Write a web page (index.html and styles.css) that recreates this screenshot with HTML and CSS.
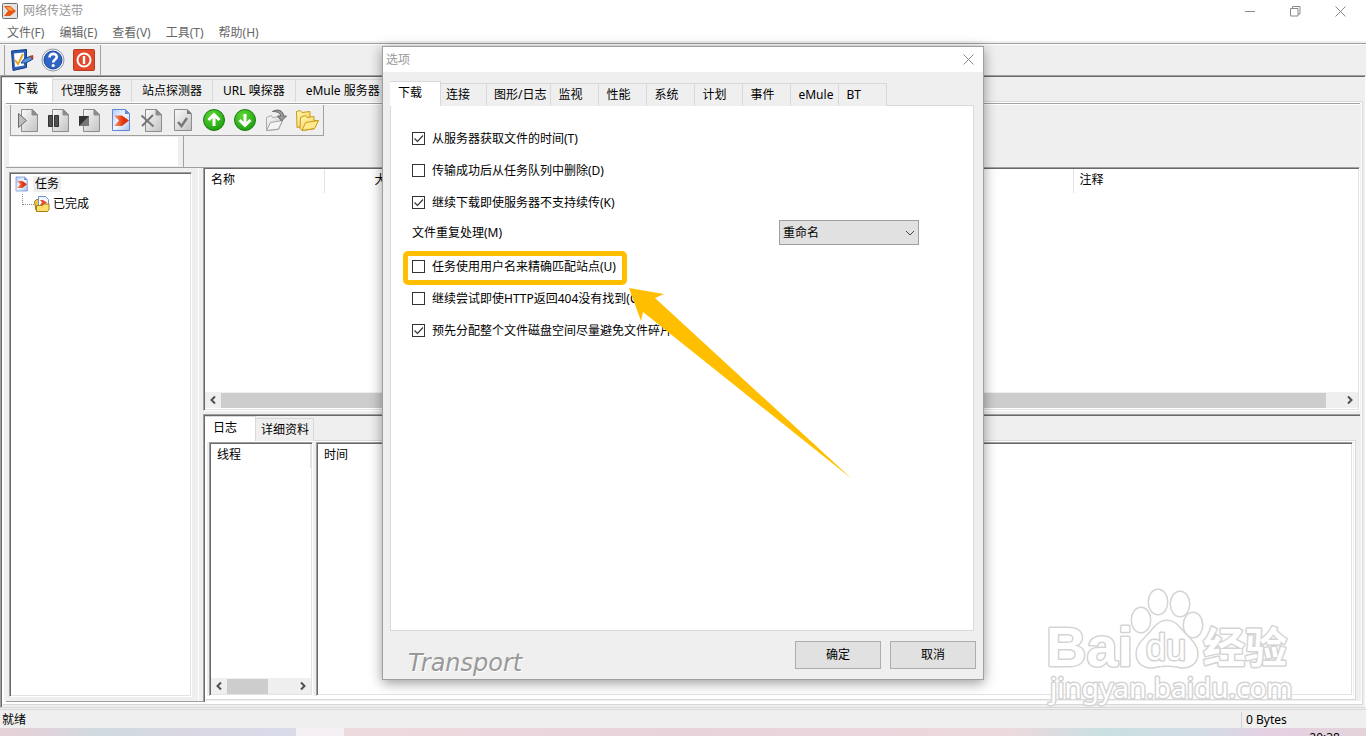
FILE: index.html
```
<!DOCTYPE html>
<html lang="zh-CN">
<head>
    <meta charset="UTF-8">
    <meta name="viewport" content="width=device-width, initial-scale=1.0">
    <title>网络传送带</title>
    <link rel="stylesheet" href="styles.css">
</head>
<body>

    <!-- shared icon parts -->
    <svg class="defs" width="0" height="0" aria-hidden="true">
        <defs>
            <linearGradient id="grey" x1="0" y1="0" x2="1" y2="1">
                <stop offset="0" stop-color="#fafafa"/>
                <stop offset="1" stop-color="#c2c2c2"/>
            </linearGradient>
            <linearGradient id="blue" x1="0" y1="0" x2="1" y2="1">
                <stop offset="0" stop-color="#b4ccf8"/>
                <stop offset=".5" stop-color="#f4f8ff"/>
                <stop offset="1" stop-color="#a9c2ee"/>
            </linearGradient>
            <linearGradient id="orange" x1="0" y1="0" x2="1" y2="0">
                <stop offset="0" stop-color="#f8a27a"/>
                <stop offset=".6" stop-color="#e0350e"/>
                <stop offset="1" stop-color="#d92c08"/>
            </linearGradient>
            <radialGradient id="green" cx=".4" cy=".3" r=".8">
                <stop offset="0" stop-color="#5fd836"/>
                <stop offset="1" stop-color="#159a0c"/>
            </radialGradient>
            <linearGradient id="yellow" x1="0" y1="0" x2="1" y2="1">
                <stop offset="0" stop-color="#fff6b8"/>
                <stop offset="1" stop-color="#f7cb45"/>
            </linearGradient>
            <symbol id="page" viewBox="0 0 24 24">
                <path d="M5.500 1.500h11l5 5v17h-16z" fill="url(#grey)" stroke="#8d8d8d"/>
                <path d="M16 1.500v5.500h5.500z" fill="#8b8b8b" stroke="#8d8d8d"/>
            </symbol>
            <symbol id="arrow-page" viewBox="0 0 24 24">
                <path d="M3.500 1.500h13l4 4v17h-17z" fill="url(#blue)" stroke="#5f87d6"/>
                <path d="M16 1.500v4.500h4.500z" fill="#5f87d6"/>
                <path d="M5 7.500h8l7 5-7 5.500H5l5-5.500z" fill="url(#orange)"/>
            </symbol>
        </defs>
    </svg>

    <div class="window">
        <header class="titlebar">
            <svg class="app-icon" viewBox="0 0 16 16">
                <rect x=".5" y=".5" width="15" height="15" rx="1" fill="#e4e4e4" stroke="#6e6e6e"/>
                <path d="M2 3h6l6 5-6 5H2l4-5z" fill="#e8550e"/>
                <path d="M4 4h4l4 3.500H7z" fill="#f7a54a"/>
            </svg>
            <h1>网络传送带</h1>
            <div class="window-controls">
                <button aria-label="最小化"><svg viewBox="0 0 11 11"><path d="M0 5.500h10"/></svg></button>
                <button aria-label="还原"><svg viewBox="0 0 11 11"><path d="M.5 2.500h7.500v7.500H.5zM2.500 2.500v-2h7.500v7.500h-2"/></svg></button>
                <button aria-label="关闭"><svg viewBox="0 0 11 11"><path d="M.5.5l10 10M10.500.5l-10 10"/></svg></button>
            </div>
        </header>

        <nav class="menubar">
            <button>文件(F)</button>
            <button>编辑(E)</button>
            <button>查看(V)</button>
            <button>工具(T)</button>
            <button>帮助(H)</button>
        </nav>

        <div class="main-bar">
            <div class="toolbar">
                <button aria-label="选项">
                    <svg viewBox="0 0 24 24">
                        <path d="M1.500 3l15-1.500v18L3 22.500z" fill="#2c62b8" stroke="#123a86"/>
                        <path d="M4 5.500l10-1v13l-9 1.500z" fill="#fff"/>
                        <path d="M5 12l3 4 5-10" fill="none" stroke="#e8a020" stroke-width="1.800"/>
                        <path d="M11 15l3-4 7-3 2 3-7 4z" fill="#5794dd" stroke="#1d4690"/>
                        <path d="M20 8l3-1 .5 3-2 1z" fill="#c33b20"/>
                    </svg>
                </button>
                <button aria-label="帮助">
                    <svg viewBox="0 0 24 24">
                        <circle cx="12" cy="12" r="11" fill="#f4f6fa" stroke="#8f98a8"/>
                        <circle cx="12" cy="12" r="9" fill="#2e64c4" stroke="#1b459c"/>
                        <path d="M8.500 9.500c0-5 7.500-4.500 7.200-.3-.2 2.400-3.500 2.500-3.500 5.300" fill="none" stroke="#fff" stroke-width="2.600"/>
                        <circle cx="12.200" cy="17.500" r="1.600" fill="#fff"/>
                    </svg>
                </button>
                <button aria-label="退出">
                    <svg viewBox="0 0 24 24">
                        <rect x="1.500" y="1.500" width="21" height="21" rx="1" fill="#e2492b" stroke="#b83a22"/>
                        <circle cx="12" cy="12" r="6.500" fill="none" stroke="#fff" stroke-width="2"/>
                        <path d="M12 8v8" stroke="#fff" stroke-width="2.400"/>
                    </svg>
                </button>
            </div>
        </div>

        <main class="client">
            <div class="tabs wide">
                <button class="active">下载</button>
                <button>代理服务器</button>
                <button>站点探测器</button>
                <button>URL 嗅探器</button>
                <button>eMule 服务器</button>
            </div>
            <div class="page">
                <div class="task-bar">
                    <div class="toolbar">
                        <button aria-label="开始"><svg viewBox="0 0 24 24"><use href="#page"/><path d="M2.500 5.500l8 7-8 7z" fill="#bdbdbd" stroke="#6a6a6a"/></svg></button>
                        <button aria-label="暂停"><svg viewBox="0 0 24 24"><use href="#page"/><path d="M1.500 7.500h4v11h-4zM7.500 7.500h4v11h-4z" fill="#505050" stroke="#333"/></svg></button>
                        <button aria-label="停止"><svg viewBox="0 0 24 24"><use href="#page"/><path d="M1 8h10v10H1z" fill="#777"/><path d="M1 8h10L1 18z" fill="#333"/></svg></button>
                        <button aria-label="新建任务"><svg viewBox="0 0 24 24"><use href="#arrow-page"/></svg></button>
                        <button aria-label="删除"><svg viewBox="0 0 24 24"><use href="#page"/><path d="M1.500 7.500l12 11M13 7L2 18" fill="none" stroke="#777" stroke-width="2"/></svg></button>
                        <button aria-label="属性"><svg viewBox="0 0 24 24"><path d="M3.500 1.500h13l4 4v17h-17z" fill="url(#grey)" stroke="#8d8d8d"/><path d="M16 1.500v4.500h4.500z" fill="#777"/><path d="M7 14l3.500 4L16 10" fill="none" stroke="#777" stroke-width="2.400"/></svg></button>
                        <button aria-label="上移"><svg viewBox="0 0 24 24"><circle cx="12" cy="12" r="10.500" fill="url(#green)" stroke="#1b7d14"/><path d="M12 18V6M6.500 12L12 6.500l5.500 5.500" fill="none" stroke="#fff" stroke-width="3"/></svg></button>
                        <button aria-label="下移"><svg viewBox="0 0 24 24"><circle cx="12" cy="12" r="10.500" fill="url(#green)" stroke="#1b7d14"/><path d="M12 6v12M6.500 12l5.500 5.500 5.500-5.500" fill="none" stroke="#fff" stroke-width="3"/></svg></button>
                        <button aria-label="打开文件"><svg viewBox="0 0 24 24"><path d="M2.500 9.500l5-2 1 2 8-1v4l2 0-4 9-12 1z" fill="url(#grey)" stroke="#aaa"/><path d="M2.500 22.500l4-8 12-2-4 8.500z" fill="#f3f3f3" stroke="#a5a5a5"/><path d="M8.500 3.500c5-3 11-1 11 4.500h3l-5 5-4-5h3c0-3-3-4.500-8-4.500z" fill="#999" stroke="#666"/></svg></button>
                        <button aria-label="打开文件夹"><svg viewBox="0 0 24 24"><path d="M1.500 3.500l4-1 1.500 2 8-1v14l-13 2z" fill="url(#yellow)" stroke="#c99a1c"/><path d="M5.500 9.500l5-2 1.500 2 7-1v4l4 0-4 8.500-12 1.500-2-2z" fill="url(#yellow)" stroke="#c99a1c"/><path d="M7 22.500l3.500-8 13-2-4 8z" fill="#ffe98c" stroke="#c99a1c"/></svg></button>
                    </div>
                </div>
                <div class="filter-bar">
                    <input type="text" aria-label="查找">
                </div>

                <div class="split">
                    <aside class="tree-pane">
                        <ul class="tree sunken">
                            <li><svg viewBox="2 0 21 24"><use href="#arrow-page" width="24" height="24"/></svg><span class="selected">任务</span></li>
                            <li class="child">
                                <svg viewBox="0 0 16 16"><path d="M.5 5.500l2-2H5V14.500H2z" fill="#f2c83c" stroke="#9b7a17"/><path d="M4.500.5h7l3 3v8h-10z" fill="#f2f6ff" stroke="#6e93d3"/><path d="M6 4h3l4 2.500L9 9H6l2-2.500z" fill="#e5512b"/><path d="M2.500 9.500h6l1.500-1.500h5v5.500l-1.500 2h-11z" fill="#ffdf6b" stroke="#a37f16"/></svg>
                                <span>已完成</span>
                            </li>
                        </ul>
                    </aside>

                    <section class="views">
                        <div class="task-list sunken">
                            <table>
                                <thead>
                                    <tr><th class="name">名称</th><th class="size">大小</th><th></th><th class="note">注释</th></tr>
                                </thead>
                            </table>
                            <div class="scrollbar">
                                <svg viewBox="0 0 16 16"><path d="M10 4.500L6.500 8l3.500 3.500"/></svg>
                                <div class="track"><div class="thumb"></div></div>
                                <svg viewBox="0 0 16 16"><path d="M6 4.500L9.500 8 6 11.500"/></svg>
                            </div>
                        </div>

                        <div class="log">
                            <div class="tabs">
                                <button class="active">日志</button>
                                <button>详细资料</button>
                            </div>
                            <div class="log-page">
                                <div class="threads sunken">
                                    <table>
                                        <thead><tr><th>线程</th></tr></thead>
                                    </table>
                                    <div class="scrollbar">
                                        <svg viewBox="0 0 16 16"><path d="M10 4.500L6.500 8l3.500 3.500"/></svg>
                                        <div class="track"><div class="thumb short"></div></div>
                                        <svg viewBox="0 0 16 16"><path d="M6 4.500L9.500 8 6 11.500"/></svg>
                                    </div>
                                </div>
                                <div class="messages sunken">
                                    <table>
                                        <thead><tr><th>时间</th></tr></thead>
                                    </table>
                                </div>
                            </div>
                        </div>
                    </section>
                </div>
            </div>
        </main>

        <footer class="statusbar">
            <span>就绪</span>
            <span class="bytes">0 Bytes</span>
        </footer>
        <div class="desktop-bar"><div class="running"></div><time>20:38</time></div>
    </div>

    <svg class="watermark" viewBox="0 0 260 130" aria-label="Baidu 经验">
        <g class="mark">
            <text class="latin" x="6" y="86">Bai</text>
            <ellipse cx="101" cy="40" rx="9" ry="12"/>
            <ellipse cx="118" cy="22" rx="9" ry="12"/>
            <ellipse cx="140" cy="24" rx="9" ry="12"/>
            <ellipse cx="153" cy="45" rx="9" ry="12"/>
            <path d="M127 41c9 0 13 8 19 14 7 7 12 12 11 21-1 8-8 12-17 11-9-2-17-2-26 0-9 1-16-3-17-11-1-9 4-14 11-21 6-6 10-14 19-14z"/>
            <text class="du" x="106" y="80">du</text>
            <text class="cjk" x="163" y="83">经验</text>
            <text class="url" x="10" y="118">jingyan.baidu.com</text>
        </g>
    </svg>

    <section class="dialog" role="dialog" aria-labelledby="dialog-title">
        <header>
            <h2 id="dialog-title">选项</h2>
            <button aria-label="关闭"><svg viewBox="0 0 11 11"><path d="M.5.5l10 10M10.500.5l-10 10"/></svg></button>
        </header>
        <div class="dialog-body">
            <div class="tabs">
                <button class="active">下载</button>
                <button>连接</button>
                <button>图形/日志</button>
                <button>监视</button>
                <button>性能</button>
                <button>系统</button>
                <button>计划</button>
                <button>事件</button>
                <button>eMule</button>
                <button>BT</button>
            </div>
            <form class="options">
                <label><input type="checkbox" checked>从服务器获取文件的时间(T)</label>
                <label><input type="checkbox">传输成功后从任务队列中删除(D)</label>
                <label><input type="checkbox" checked>继续下载即使服务器不支持续传(K)</label>
                <div class="duplicate">
                    <label for="duplicate">文件重复处理(M)</label>
                    <select id="duplicate"><option>重命名</option></select>
                </div>
                <label class="marked"><input type="checkbox">任务使用用户名来精确匹配站点(U)</label>
                <label><input type="checkbox">继续尝试即使HTTP返回404没有找到(C)</label>
                <label><input type="checkbox" checked>预先分配整个文件磁盘空间尽量避免文件碎片</label>
            </form>
        </div>
        <footer>
            <span class="brand">Transport</span>
            <button>确定</button>
            <button>取消</button>
        </footer>
        <svg class="pointer" viewBox="0 0 223 191" aria-hidden="true">
            <path d="M0 0l35 6-9 4 197 181L14 24l-2 9z" fill="#ffbf00"/>
        </svg>
    </section>

</body>
</html>
```
FILE: styles.css
```
* {
    box-sizing: border-box;
}
body {
    margin: 0;
    font: 12px/16px "Noto Sans", "Noto Sans CJK SC", sans-serif;
    color: #000;
    background: #efefef;
    overflow: hidden;
}
h1, h2 {
    margin: 0;
    font-size: 12px;
    font-weight: normal;
    color: #999;
}
button, input, select {
    font: inherit;
    color: inherit;
    margin: 0;
}
button {
    padding: 0;
    border: none;
    background: none;
}
svg {
    display: block;
}
.defs {
    position: absolute;
}

.window {
    display: flex;
    flex-direction: column;
    height: 100vh;
}
.titlebar {
    display: flex;
    align-items: center;
    gap: 5px;
    height: 22px;
    padding: 0 3px 0 2px;
    background: #fff;
}
.app-icon {
    width: 16px;
    height: 16px;
}
.window-controls {
    display: flex;
    margin-left: auto;
}
.window-controls button {
    width: 45px;
    height: 20px;
    display: flex;
    align-items: center;
    justify-content: center;
}
.window-controls svg,
.dialog header svg {
    width: 11px;
    height: 11px;
    fill: none;
    stroke: #8a8a8a;
}
.menubar {
    display: flex;
    gap: 15px;
    height: 19px;
    padding: 2px 7px 0;
    background: #fff;
    color: #666;
}

.main-bar {
    display: flex;
    height: 34px;
    padding: 4px 0 0 4px;
    background: linear-gradient(#efefef 2px, #a0a0a0 2px, #a0a0a0 3px, #fff 3px, #fff 4px, #efefef 4px);
}
.toolbar {
    display: flex;
    align-items: center;
    gap: 7px;
    border-left: 1px solid #a0a0a0;
    border-right: 1px solid #a0a0a0;
    padding: 0 4px 0 5px;
}
.toolbar svg {
    width: 24px;
    height: 24px;
}

.tabs {
    display: flex;
    align-items: flex-end;
    position: relative;
    z-index: 1;
    height: 25px;
    margin-bottom: -1px;
}
.tabs button {
    height: 23px;
    min-width: 48px;
    padding: 0 4px 0 7px;
    text-align: left;
    background: #efefef;
    border-top: 1px solid #d9d9d9;
    border-right: 1px solid #d9d9d9;
}
.tabs.wide button {
    padding: 0 10px;
}
.tabs .active,
.tabs.wide .active {
    position: relative;
    z-index: 1;
    width: 51px;
    height: 25px;
    margin-right: -2px;
    padding: 0 0 2px 8px;
    background: #fff;
}
.tabs.wide .active {
    padding-left: 12px;
}

.client {
    flex: 1;
    min-height: 0;
    display: flex;
    flex-direction: column;
    border: 1px solid;
    border-color: #a0a0a0 #fff #d9d9d9 #a0a0a0;
    box-shadow: inset 1px 1px #696969;
    padding: 1px 2px 2px 1px;
    margin-bottom: 1px;
}
.page {
    flex: 1;
    min-height: 0;
    display: flex;
    flex-direction: column;
    border: 1px solid #d9d9d9;
    border-left-color: #fff;
    box-shadow: inset 0 0 0 1px #fff, inset 0 -3px #fff;
    padding: 1px 2px 2px 3px;
}
.task-bar {
    display: flex;
    height: 33px;
    padding: 1px 0 0 4px;
    border-top: 1px solid #a0a0a0;
    box-shadow: inset 0 1px #fff;
}
.task-bar .toolbar {
    border-bottom: 1px solid #a0a0a0;
}
.filter-bar {
    display: flex;
    height: 32px;
    border-bottom: 1px solid #a0a0a0;
}
.filter-bar::after {
    content: "";
    width: 5px;
    border-right: 1px solid #a0a0a0;
}
.filter-bar input {
    width: 169px;
    height: 29px;
    margin: 1px 0 1px 3px;
    border: none;
    background: #fff;
}

.sunken {
    background: #fff;
    border: 1px solid;
    border-color: #a0a0a0 #fff #fff #a0a0a0;
    box-shadow: inset 1px 1px #696969, inset -1px -1px #e3e3e3;
    padding: 1px;
}
.split {
    flex: 1;
    min-height: 0;
    display: flex;
}
.tree-pane {
    display: flex;
    width: 197px;
    padding: 4px 11px 4px 3px;
    border-bottom: 1px solid #a0a0a0;
    box-shadow: inset -4px 0 #efefef, inset -5px 0 #fff;
}
.tree {
    flex: 1;
    margin: 0;
    padding: 1px 4px;
    list-style: none;
}
.tree li {
    display: flex;
    align-items: center;
    gap: 3px;
    height: 20px;
}
.tree svg {
    width: 16px;
    height: 16px;
}
.selected {
    padding: 0 2px;
    background: #efefef;
}
.child::before {
    content: "";
    width: 11px;
    height: 10px;
    margin: 0 -3px 10px 8px;
    border-left: 1px dotted #888;
    border-bottom: 1px dotted #888;
}
.views {
    flex: 1;
    min-width: 0;
    display: flex;
    flex-direction: column;
    gap: 3px;
    margin-top: -1px;
}
.task-list {
    flex: 0 0 244px;
    display: flex;
    flex-direction: column;
}
table {
    width: 100%;
    table-layout: fixed;
    border-collapse: collapse;
}
th {
    height: 24px;
    padding: 0 6px 2px;
    font-weight: normal;
    text-align: left;
    border-right: 1px solid #e3e3e3;
}
.name {
    width: 119px;
}
.size {
    width: 81px;
    text-align: right;
}
.note {
    width: 285px;
}
.note,
.messages th {
    border-right: none;
}
.scrollbar {
    display: flex;
    align-items: center;
    height: 16px;
    margin-top: auto;
    background: #efefef;
}
.task-list .scrollbar {
    margin-bottom: 1px;
}
.scrollbar svg {
    width: 16px;
    height: 16px;
    fill: none;
    stroke: #505050;
    stroke-width: 2;
}
.track {
    flex: 1;
    height: 15px;
}
.thumb {
    width: calc(100% - 16px);
    height: 15px;
    background: #cdcdcd;
}
.thumb.short {
    width: 60%;
}
.log {
    flex: 1;
    min-height: 0;
    display: flex;
    flex-direction: column;
    border-top: 1px solid #a0a0a0;
    border-left: 1px solid #a0a0a0;
    box-shadow: inset 1px 1px #696969;
    padding: 1px 4px 2px 1px;
}
.log-page {
    flex: 1;
    min-height: 0;
    display: flex;
    gap: 3px;
    border: 1px solid #d9d9d9;
    border-left-color: #fff;
    box-shadow: inset 0 0 0 1px #fff, inset 0 -3px #fff;
    padding: 1px 2px 3px 3px;
}
.threads {
    display: flex;
    flex-direction: column;
    width: 104px;
}
.messages {
    flex: 1;
}

.statusbar {
    display: flex;
    align-items: center;
    justify-content: space-between;
    height: 19px;
    padding: 2px 0 0 2px;
    border-top: 1px solid #d9d9d9;
}
.bytes {
    width: 125px;
    padding-left: 4px;
    border-left: 1px solid #d0d0d0;
}
.desktop-bar {
    display: flex;
    height: 8px;
    overflow: hidden;
    padding: 0 26px 0 296px;
    justify-content: space-between;
    background: linear-gradient(90deg, #e5d2d8 0, #e1d2d9 3%, #d0dae0 7%, #d9d7e3 14%, #dadceb 22%, #eddade 25%, #e8d3db 50%, #ecd9dd 74%, #c9e0e2 81%, #d3dce5 88%, #e4d0e2 93%, #e3d3d9 100%);
}
.running {
    width: 48px;
    background: #f4f0f4;
}
.desktop-bar time {
    padding-top: 2px;
}

.watermark {
    position: absolute;
    right: 66px;
    bottom: 26px;
    width: 260px;
    height: 130px;
}
.mark {
    fill: #fff;
    stroke: #d4d4d4;
    stroke-width: 3;
    paint-order: stroke;
    stroke-linejoin: round;
}
.latin {
    font: bold 56px "Liberation Sans", sans-serif;
}
.du {
    font: 36px "Liberation Sans", sans-serif;
}
.cjk {
    font: bold 42px "Noto Sans CJK SC", sans-serif;
}
.url {
    font: 28px "Noto Sans", sans-serif;
}

.dialog {
    position: absolute;
    top: 46px;
    left: 382px;
    z-index: 2;
    width: 602px;
    background: #efefef;
    border: 1px solid #a0a0a0;
    box-shadow: 0 3px 12px rgba(0, 0, 0, 0.4);
}
.dialog header {
    display: flex;
    align-items: center;
    justify-content: space-between;
    height: 25px;
    padding: 0 9px 0 3px;
    background: #fff;
}
.dialog-body {
    padding: 9px 9px 0 7px;
}
.options {
    height: 526px;
    padding: 17px 54px 0 21px;
    background: #fff;
    border: 1px solid #d9d9d9;
}
.options > label {
    display: flex;
    align-items: center;
    gap: 7px;
    width: fit-content;
    height: 32px;
    white-space: nowrap;
}
.options input {
    appearance: none;
    width: 13px;
    height: 13px;
    margin-bottom: 1px;
    border: 1px solid #333;
    background: #fff;
}
.options input:checked {
    background: url('data:image/svg+xml,<svg xmlns="http://www.w3.org/2000/svg" viewBox="0 0 11 11"><path d="M1.500 5.500l3 3L10 2.500" fill="none" stroke="%23333" stroke-width="1.200"/></svg>');
}
.duplicate {
    display: flex;
    align-items: center;
    justify-content: space-between;
    height: 28px;
    margin-bottom: 4px;
}
.duplicate select {
    appearance: none;
    width: 140px;
    height: 25px;
    margin-bottom: 1px;
    padding: 0 3px;
    border: 1px solid #a0a0a0;
    border-radius: 0;
    background: #e1e1e1 url('data:image/svg+xml,<svg xmlns="http://www.w3.org/2000/svg" viewBox="0 0 10 6"><path d="M1 1l4 4 4-4" fill="none" stroke="%23444"/></svg>') no-repeat right 3px center / 10px 6px;
}
.marked {
    position: relative;
}
.marked::after {
    content: "";
    position: absolute;
    inset: 0 -11px -2px -9px;
    border: 5px solid #ffbf00;
    border-radius: 5px;
}
.dialog footer {
    display: flex;
    align-items: center;
    gap: 9px;
    height: 48px;
    padding: 0 7px 0 25px;
}
.dialog footer button {
    width: 86px;
    height: 28px;
    background: #e1e1e1;
    border: 1px solid #adadad;
}
.brand {
    margin: 16px auto 0 0;
    font: oblique 24px/16px "DejaVu Sans", sans-serif;
    color: #999;
    text-shadow: 1px 1px #fff;
}
.pointer {
    position: absolute;
    left: 246px;
    top: 241px;
    width: 223px;
    height: 191px;
}
```
